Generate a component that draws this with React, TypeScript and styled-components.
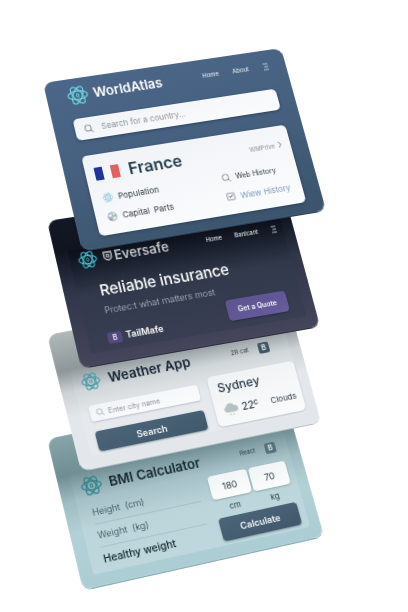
import React from "react";
import styled, { createGlobalStyle, css } from "styled-components";

type Point = [number, number];
type Quad = [Point, Point, Point, Point];

const CARD_WIDTH = 242;

/* Perspective matrix that lays a w by h box onto four corners (tl, tr, br, bl). */
function perspectiveTo(w: number, h: number, [p0, p1, p2, p3]: Quad): string {
  const sx = p0[0] - p1[0] + p2[0] - p3[0];
  const sy = p0[1] - p1[1] + p2[1] - p3[1];
  const dx1 = p1[0] - p2[0];
  const dy1 = p1[1] - p2[1];
  const dx2 = p3[0] - p2[0];
  const dy2 = p3[1] - p2[1];
  const det = dx1 * dy2 - dx2 * dy1;
  const g = (sx * dy2 - dx2 * sy) / det;
  const k = (dx1 * sy - sx * dy1) / det;
  const m = [
    (p1[0] - p0[0] + g * p1[0]) / w, (p1[1] - p0[1] + g * p1[1]) / w, 0, g / w,
    (p3[0] - p0[0] + k * p3[0]) / h, (p3[1] - p0[1] + k * p3[1]) / h, 0, k / h,
    0, 0, 1, 0,
    p0[0], p0[1], 0, 1,
  ];
  return `matrix3d(${m.map((n) => n.toFixed(8)).join(",")})`;
}

const GlobalStyle = createGlobalStyle`
  *, *::before, *::after { box-sizing: border-box; }
  body {
    margin: 0;
    background: #fff;
    font-family: Inter, "Open Sans", sans-serif;
    -webkit-font-smoothing: antialiased;
  }
  h1, h2, p { margin: 0; }
  button, input { font: inherit; }
`;

const Stage = styled.main`
  display: flex;
  flex-direction: column;
  align-items: center;
  min-height: 100vh;
  padding: 83px 0 20px;
  overflow: hidden;
`;

const cardThemes = {
  navy: css`
    background: linear-gradient(172deg, #4b6688 0%, #46607f 45%, #3b546c 100%);
    box-shadow: 0 1px 0 #2b3f55, inset 0 0 1px #7189a3;
    color: #fff;
  `,
  night: css`
    background: linear-gradient(180deg, #141826 0%, #10141f 22%, #30364a 50%, #45455b 100%);
    box-shadow: 0 1px 0 #2a2b3c, inset 0 0 1px #6a6a80;
    color: #fff;
  `,
  cloud: css`
    background: linear-gradient(180deg, #b0b8b9 0%, #8d9699 28%, #cdd2d5 44%, #e3e7eb 62%, #e3e7ec 100%);
    box-shadow: 0 1px 0 #b4bfc4, inset 0 0 1px #fff;
    color: #12212f;
  `,
  mint: css`
    background: linear-gradient(180deg, #86a5aa 0%, #6f8d92 26%, #9fbcc2 44%, #b3d0d6 64%, #accdd5 100%);
    box-shadow: 0 1px 0 #87a8b2, inset 0 0 1px #dff0f3;
    color: #14272f;
  `,
};

type Tone = keyof typeof cardThemes;

const Card = styled.article<{ $tone: Tone; $h: number; $quad: Quad; $level: number }>`
  position: relative;
  flex: none;
  z-index: ${(p) => p.$level};
  width: ${CARD_WIDTH}px;
  min-height: ${(p) => p.$h}px;
  border-radius: 9px;
  transform-origin: 0 0;
  transform: ${(p) => perspectiveTo(CARD_WIDTH, p.$h, p.$quad)};
  ${(p) => cardThemes[p.$tone]}
`;

const AtlasCard = styled(Card)`
  padding: 6px 17px 11px 20px;
`;

const LowerCard = styled(Card)`
  margin-top: -34px;
  padding: 33px 11px 12px 13px;
`;

/* Inset sheet that sits on the card and leaves a rim round it. */
const Sheet = styled.div<{ $bg: string; $h: number; $top?: number }>`
  min-height: ${(p) => p.$h}px;
  padding: ${(p) => p.$top ?? 0}px 0 0 8px;
  border-radius: 0 0 3px 3px;
  background: ${(p) => p.$bg};
`;

const Header = styled.header<{ $right?: number }>`
  display: flex;
  align-items: center;
  justify-content: space-between;
  height: 22px;
  padding-right: ${(p) => p.$right ?? 0}px;
`;

const Brand = styled.div<{ $gap: number; $color?: string }>`
  display: flex;
  align-items: center;
  gap: ${(p) => p.$gap}px;
  color: ${(p) => p.$color ?? "inherit"};
`;

const Title = styled.h1`
  font-size: 13px;
  font-weight: 600;
  line-height: 18px;
  white-space: nowrap;
`;

const Nav = styled.nav<{ $gap: number }>`
  display: flex;
  align-items: center;
  gap: ${(p) => p.$gap}px;
  font-size: 6px;
  line-height: 8px;
`;

const NavLink = styled.a`
  color: #eef2f6;
  text-decoration: none;
`;

const IconButton = styled.button`
  display: flex;
  padding: 0;
  border: 0;
  background: none;
  color: #dfe6ee;
`;

const SearchField = styled.label<{ $size: "large" | "small" }>`
  display: flex;
  align-items: center;
  background: linear-gradient(170deg, #f1f4f8, #fafbfc);
  color: #7d8790;
  ${(p) =>
    p.$size === "large"
      ? css`
          gap: 8px;
          height: 22px;
          margin-top: 13px;
          padding: 0 9px;
          border-radius: 5px;
          font-size: 8px;
          box-shadow: 0 1px 3px rgba(20, 35, 55, 0.5);
        `
      : css`
          gap: 4px;
          height: 16px;
          padding: 0 6px;
          border-radius: 3px;
          font-size: 7px;
          color: #a3adb3;
          box-shadow: 0 1px 2px rgba(60, 80, 95, 0.25);
        `}
`;

const SearchInput = styled.input`
  flex: 1;
  min-width: 0;
  padding: 0;
  border: 0;
  outline: 0;
  background: none;
  color: #3b4650;
  &::placeholder {
    color: #8b9299;
    opacity: 1;
  }
`;

const CountryPanel = styled.section`
  height: 80px;
  margin-top: 16px;
  padding: 9px 8px 8px 9px;
  border-radius: 5px;
  background: linear-gradient(170deg, #f0f3f7, #fbfcfd);
  box-shadow: 0 1px 3px rgba(20, 35, 55, 0.4);
  color: #24323f;
`;

const CountryHead = styled.div`
  display: flex;
  align-items: center;
  height: 20px;
  gap: 9px;
`;

const Flag = styled.span`
  width: 24px;
  height: 13px;
  border-radius: 1px;
  background: linear-gradient(90deg, #20359b 0 8px, #f6f7f9 8px 16px, #e0615f 16px);
`;

const CountryName = styled.h2`
  flex: 1;
  font-size: 16px;
  font-weight: 600;
  line-height: 20px;
  color: #1f3b49;
`;

const MoreLink = styled.a`
  display: flex;
  align-items: center;
  gap: 2px;
  font-size: 6px;
  color: #8b9299;
  text-decoration: none;
`;

const Facts = styled.div`
  display: grid;
  grid-template-columns: 118px 1fr;
  grid-auto-rows: 19px;
  align-items: center;
  margin-top: 5px;
  padding-left: 2px;
`;

const Fact = styled.a<{ $size: number; $color?: string }>`
  display: flex;
  align-items: center;
  gap: 5px;
  font-size: ${(p) => p.$size}px;
  line-height: 12px;
  white-space: pre;
  color: ${(p) => p.$color ?? "#2d3842"};
  text-decoration: none;
`;

const Headline = styled.h2`
  margin: 12px 0 0 14px;
  font-size: 15px;
  font-weight: 500;
  line-height: 20px;
  white-space: nowrap;
`;

const Tagline = styled.p`
  margin: 4px 0 0 14px;
  font-size: 9px;
  font-weight: 300;
  line-height: 12px;
  white-space: nowrap;
  color: #b9bcc8;
`;

const OfferRow = styled.div`
  display: flex;
  align-items: flex-end;
  justify-content: space-between;
  margin-top: 4px;
  padding: 0 15px 0 11px;
`;

const Partner = styled.strong`
  display: flex;
  align-items: center;
  gap: 4px;
  margin-bottom: -2px;
  font-size: 9px;
  font-weight: 600;
  line-height: 12px;
`;

const Badge = styled.span<{ $bg: string; $size?: number }>`
  display: grid;
  place-items: center;
  width: ${(p) => p.$size ?? 11}px;
  height: 11px;
  border-radius: 2px;
  background: ${(p) => p.$bg};
  color: #e8edf0;
  font-size: 7px;
  font-weight: 600;
  line-height: 11px;
`;

const Button = styled.button<{ $kind: "quote" | "wide" | "calc" }>`
  padding: 0;
  border: 0;
  border-radius: 4px;
  color: #f4f7fa;
  font-weight: 600;
  background: linear-gradient(170deg, #4b6478, #42596c);
  box-shadow: 0 1px 2px rgba(30, 50, 65, 0.4);
  ${(p) =>
    p.$kind === "quote" &&
    css`
      width: 62px;
      height: 21px;
      font-size: 7px;
      background: linear-gradient(170deg, #5d5490, #675b9c);
      box-shadow: 0 1px 2px rgba(20, 20, 40, 0.4);
    `}
  ${(p) =>
    p.$kind === "wide" &&
    css`
      height: 20px;
      font-size: 9px;
    `}
  ${(p) =>
    p.$kind === "calc" &&
    css`
      height: 23px;
      font-size: 9px;
    `}
`;

const Meta = styled.div`
  display: flex;
  align-items: center;
  gap: 10px;
  font-size: 6px;
  line-height: 8px;
  color: #2f3e48;
`;

const WeatherBody = styled.div`
  display: grid;
  grid-template-columns: 109px 1fr;
  gap: 11px;
  margin-top: 8px;
  padding-left: 1px;
`;

const SearchForm = styled.form`
  display: flex;
  flex-direction: column;
  gap: 10px;
  padding-top: 5px;
`;

const CityCard = styled.section`
  height: 51px;
  padding: 5px 6px 5px 8px;
  border-radius: 5px;
  background: linear-gradient(170deg, #eff2f4, #fafbfb);
  box-shadow: 0 1px 2px rgba(60, 80, 95, 0.25);
  color: #2a3c4a;
`;

const City = styled.h2`
  font-size: 12px;
  font-weight: 500;
  line-height: 16px;
`;

const Conditions = styled.div`
  display: flex;
  align-items: center;
  gap: 3px;
  margin-top: 5px;
  font-size: 8px;
  line-height: 18px;
`;

const Temperature = styled.span`
  flex: 1;
  display: flex;
  font-size: 10px;
  font-weight: 500;
`;

const Unit = styled.sup`
  font-size: 8px;
  line-height: 14px;
`;

const BmiBody = styled.div`
  display: grid;
  grid-template-columns: 106px 80px;
  gap: 12px;
  padding: 5px 0 0 5px;
`;

const Measures = styled.div`
  display: flex;
  flex-direction: column;
  gap: 3px;
  padding-top: 3px;
`;

const MeasureLabel = styled.label`
  height: 20px;
  border-bottom: 1px solid rgba(90, 125, 135, 0.2);
  font-size: 9px;
  font-weight: 300;
  line-height: 16px;
  white-space: pre;
  color: #2b4049;
`;

const Result = styled.output`
  font-size: 10px;
  font-weight: 500;
  line-height: 16px;
  color: #12242c;
  white-space: nowrap;
`;

const Fields = styled.div`
  display: grid;
  grid-template-columns: 40px 38px;
  column-gap: 2px;
  justify-items: center;
  font-size: 8px;
  line-height: 10px;
  color: #2f444d;
`;

const NumberInput = styled.input`
  width: 100%;
  height: 24px;
  padding: 0;
  border: 0;
  border-radius: 4px;
  background: linear-gradient(170deg, #f0f4f6, #fbfcfc);
  box-shadow: 0 1px 2px rgba(50, 80, 90, 0.3);
  color: #2c3a42;
  font-size: 9px;
  text-align: center;
`;

const UnitLabel = styled.span`
  padding-top: 4px;
`;

const CalcColumn = styled.div`
  display: flex;
  flex-direction: column;
  gap: 5px;
`;

function AtomIcon({ size, color }: { size: number; color: string }) {
  return (
    <svg width={size} height={size} viewBox="0 0 24 24" fill="none" stroke={color} strokeWidth="1.3" aria-hidden="true">
      <ellipse cx="12" cy="12" rx="11" ry="5" />
      <ellipse cx="12" cy="12" rx="11" ry="5" transform="rotate(60 12 12)" />
      <ellipse cx="12" cy="12" rx="11" ry="5" transform="rotate(120 12 12)" />
      <ellipse cx="12" cy="12" rx="1.3" ry="2" strokeWidth="1" />
    </svg>
  );
}

function LensIcon({ size, color }: { size: number; color: string }) {
  return (
    <svg width={size} height={size} viewBox="0 0 12 12" fill="none" stroke={color} strokeWidth="1.2" strokeLinecap="round" aria-hidden="true">
      <circle cx="5.2" cy="5.2" r="4" />
      <path d="M8.3 8.3 11 11" />
    </svg>
  );
}

function MenuIcon() {
  return (
    <svg width="7" height="8" viewBox="0 0 7 8" fill="none" stroke="currentColor" strokeWidth="0.8" aria-hidden="true">
      <path d="M1 1h5M2 4h4M1 7h5" />
    </svg>
  );
}

function GlobeIcon() {
  return (
    <svg width="10" height="10" viewBox="0 0 10 10" aria-hidden="true">
      <circle cx="5" cy="5" r="4.6" fill="#a9b4bc" />
      <path d="M1.2 3.2 3.8 2l1.4 1.4L4 5.2 2.4 5zM5.8 1l2.4 1.4L7 4 5.6 3zM5 6l2.6-.8 1.2 1L6.6 8.8 5.4 8z" fill="#e9eef1" />
      <path d="M2 6.4l1.6.8-.2 1.4z" fill="#73818b" />
    </svg>
  );
}

function CheckBoxIcon() {
  return (
    <svg width="9" height="9" viewBox="0 0 9 9" fill="none" aria-hidden="true">
      <rect x="0.8" y="1.2" width="7.2" height="6.6" rx="0.6" stroke="#6d7780" strokeWidth="0.7" />
      <path d="M2.6 4.2 4 5.4 6.4 2.8" stroke="#2d3842" strokeWidth="0.9" />
    </svg>
  );
}

function ChevronIcon() {
  return (
    <svg width="6" height="8" viewBox="0 0 6 8" fill="none" stroke="#5f6a73" strokeWidth="0.8" aria-hidden="true">
      <path d="M2 1l2.6 3L2 7" />
    </svg>
  );
}

function ShieldIcon() {
  return (
    <svg width="9" height="10" viewBox="0 0 9 10" fill="none" stroke="currentColor" strokeWidth="1.3" aria-hidden="true">
      <path d="M.8 1h7.4v4.6c0 2-1.6 3-3.7 3.6C2.4 8.6.8 7.6.8 5.6z" />
      <path d="M6.2 3.4H3.2v2.6h2.8V4.8H4.6" strokeWidth="1" />
    </svg>
  );
}

function RainCloudIcon() {
  return (
    <svg width="16" height="15" viewBox="0 0 16 15" aria-hidden="true">
      <path d="M4 10.5a3 3 0 0 1-.6-5.9A4.4 4.4 0 0 1 11.6 4 3.3 3.3 0 0 1 12.5 10.5z" fill="#b7c1c3" />
      <path d="M6.5 12v1.4M9.6 12v1.4" stroke="#bdc6ca" strokeWidth="1.2" />
    </svg>
  );
}

const quads: Record<Tone, Quad> = {
  navy: [[-40, 0], [198, -35], [243, 127], [-1, 168]],
  night: [[-36, 2], [199, -34], [237, 107], [-2, 149]],
  cloud: [[-36, 2], [202, -43], [238, 89], [-2, 138]],
  mint: [[-36, 2], [200, -46], [241, 99], [0, 153]],
};

export default function App() {
  return (
    <>
      <GlobalStyle />
      <Stage>
        <AtlasCard $tone="navy" $h={170} $level={4} $quad={quads.navy}>
          <Header>
            <Brand $gap={5}>
              <AtomIcon size={21} color="#6fdbe6" />
              <Title>WorldAtlas</Title>
            </Brand>
            <Nav $gap={14}>
              <NavLink href="#home">Home</NavLink>
              <NavLink href="#about">About</NavLink>
              <IconButton aria-label="Menu"><MenuIcon /></IconButton>
            </Nav>
          </Header>
          <SearchField $size="large">
            <LensIcon size={9} color="#7d8790" />
            <SearchInput aria-label="Search for a country" placeholder="Search for a country..." />
          </SearchField>
          <CountryPanel>
            <CountryHead>
              <Flag role="img" aria-label="Flag of France" />
              <CountryName>France</CountryName>
              <MoreLink href="#more">WMPrive <ChevronIcon /></MoreLink>
            </CountryHead>
            <Facts>
              <Fact href="#population" $size={8}><AtomIcon size={10} color="#7fc0cf" />Population</Fact>
              <Fact href="#web" $size={7}><LensIcon size={9} color="#8b959d" />Web History</Fact>
              <Fact href="#capital" $size={8}><GlobeIcon />{"Capital  Parts"}</Fact>
              <Fact href="#view" $size={8} $color="#7f9ab5"><CheckBoxIcon />Wiew History</Fact>
            </Facts>
          </CountryPanel>
        </AtlasCard>

        <LowerCard $tone="night" $h={148} $level={3} $quad={quads.night}>
          <Sheet $h={103} $bg="linear-gradient(180deg, rgba(8, 12, 22, 0.7), rgba(48, 58, 74, 0.6) 45%, rgba(54, 60, 80, 0.7))">
            <Header $right={6}>
              <Brand $gap={6} $color="#bfc2c8">
                <AtomIcon size={19} color="#3fc9d6" />
                <Brand $gap={2}>
                  <ShieldIcon />
                  <Title>Eversafe</Title>
                </Brand>
              </Brand>
              <Nav $gap={13}>
                <NavLink href="#home">Home</NavLink>
                <NavLink href="#banlcant">Banlcant</NavLink>
                <IconButton aria-label="Menu"><MenuIcon /></IconButton>
              </Nav>
            </Header>
            <Headline>Reliable insurance</Headline>
            <Tagline>Protec:t what matters most</Tagline>
            <OfferRow>
              <Partner><Badge $bg="#54497f" $size={14}>B</Badge>TailMafe</Partner>
              <Button $kind="quote">Get a Quote</Button>
            </OfferRow>
          </Sheet>
        </LowerCard>

        <LowerCard $tone="cloud" $h={138} $level={2} $quad={quads.cloud}>
          <Sheet $h={93} $top={9} $bg="linear-gradient(180deg, rgba(255, 255, 255, 0), rgba(236, 240, 243, 0.4))">
            <Header $right={20}>
              <Brand $gap={8}>
                <AtomIcon size={19} color="#3d98a5" />
                <Title>Weather App</Title>
              </Brand>
              <Meta>2R cat <Badge $bg="#435665">B</Badge></Meta>
            </Header>
            <WeatherBody>
              <SearchForm onSubmit={(e) => e.preventDefault()}>
                <SearchField $size="small">
                  <LensIcon size={8} color="#a9b2b8" />
                  <SearchInput aria-label="Enter city name" placeholder="Enter city name" />
                </SearchField>
                <Button $kind="wide">Search</Button>
              </SearchForm>
              <CityCard>
                <City>Sydney</City>
                <Conditions>
                  <RainCloudIcon />
                  <Temperature>22<Unit>c</Unit></Temperature>
                  Clouds
                </Conditions>
              </CityCard>
            </WeatherBody>
          </Sheet>
        </LowerCard>

        <LowerCard $tone="mint" $h={152} $level={1} $quad={quads.mint}>
          <Sheet $h={107} $top={10} $bg="linear-gradient(180deg, rgba(255, 255, 255, 0), rgba(214, 230, 232, 0.4))">
            <Header $right={12}>
              <Brand $gap={7}>
                <AtomIcon size={21} color="#2c7f89" />
                <Title>BMI Calculator</Title>
              </Brand>
              <Meta>React <Badge $bg="#52727c">B</Badge></Meta>
            </Header>
            <BmiBody>
              <Measures>
                <MeasureLabel htmlFor="height">{"Height  (cm)"}</MeasureLabel>
                <MeasureLabel htmlFor="weight">{"Weight  (kg)"}</MeasureLabel>
                <Result>Healthy weight</Result>
              </Measures>
              <CalcColumn>
                <Fields>
                  <NumberInput id="height" defaultValue="180" />
                  <NumberInput id="weight" defaultValue="70" />
                  <UnitLabel>cm</UnitLabel>
                  <UnitLabel>kg</UnitLabel>
                </Fields>
                <Button $kind="calc">Calculate</Button>
              </CalcColumn>
            </BmiBody>
          </Sheet>
        </LowerCard>
      </Stage>
    </>
  );
}
